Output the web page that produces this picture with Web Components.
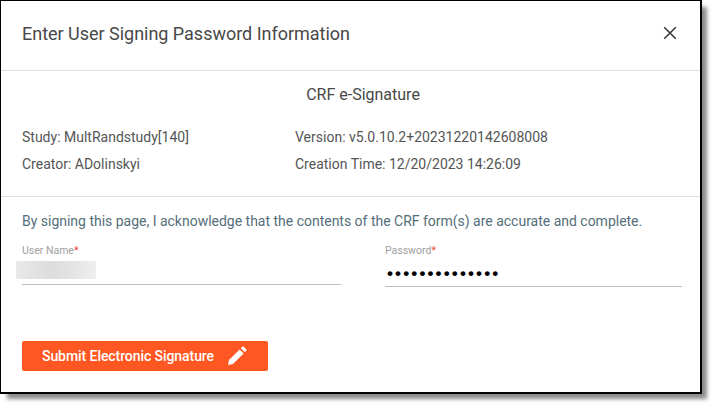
<!DOCTYPE html>
<html>
<head>
<meta charset="utf-8">
<title>Enter User Signing Password Information</title>
<style>
    html, body { margin: 0; padding: 0; background: #fff; }
    body { min-height: 406px; font-family: Roboto, "Liberation Sans", sans-serif; }
</style>
</head>
<body>
<signing-dialog>
    <span slot="title">Enter User Signing Password Information</span>
    <sign-info>
        <span slot="heading">CRF e-Signature</span>
        <span slot="study">Study: MultRandstudy[140]</span>
        <span slot="version">Version: v5.0.10.2+20231220142608008</span>
        <span slot="creator">Creator: ADolinskyi</span>
        <span slot="time">Creation Time: 12/20/2023 14:26:09</span>
    </sign-info>
    <sign-form>
        <span slot="notice">By signing this page, I acknowledge that the contents of the CRF form(s) are accurate and complete.</span>
        <text-field slot="user" label="User Name" blurred></text-field>
        <text-field slot="password" label="Password" value="••••••••••••••"></text-field>
        <submit-button slot="submit">Submit Electronic Signature</submit-button>
    </sign-form>
</signing-dialog>

<script>
class signingDialog extends HTMLElement {
    constructor() {
        super();
        this.shadow = this.attachShadow({ mode: 'open' });
    }

    connectedCallback() {
        this.shadow.innerHTML = `
            <style>
                :host {
                    display: block;
                    box-sizing: border-box;
                    width: 702px;
                    height: 394px;
                    background: #fff;
                    border: 1px solid #000;
                    border-width: 1px 2px 2px 1px;
                    box-shadow: 6px 6px 4px -1px #8c8c8c;
                    color: #424242;
                }

                header {
                    display: flex;
                    align-items: center;
                    justify-content: space-between;
                    box-sizing: border-box;
                    height: 70px;
                    padding: 0 23px 5px 21px;
                    border-bottom: 1px solid #e0e0e0;
                    font-size: 18px;
                    letter-spacing: -0.02px;
                    color: #484848;
                }

                svg { display: block; }
            </style>
            <header>
                <slot name="title"></slot>
                <svg width="14" height="14" viewBox="0 0 14 14" fill="none" stroke="#333" stroke-width="1.5">
                    <path d="M1.2 1.2 12.8 12.8M12.8 1.2 1.2 12.8"/>
                </svg>
            </header>
            <slot></slot>
        `;
    }
}

class signInfo extends HTMLElement {
    constructor() {
        super();
        this.shadow = this.attachShadow({ mode: 'open' });
    }

    connectedCallback() {
        this.shadow.innerHTML = `
            <style>
                :host {
                    display: block;
                    height: 125px;
                    padding: 0 21px;
                    border-bottom: 1px solid #e0e0e0;
                    font-size: 14px;
                    color: #555;
                }

                .heading {
                    box-sizing: border-box;
                    height: 52px;
                    padding: 15px 0 0 25px;
                    line-height: 18px;
                    text-align: center;
                    font-size: 16px;
                    color: #484848;
                }

                .rows {
                    display: grid;
                    grid-template-columns: 273px 1fr;
                    grid-auto-rows: 27px;
                    align-items: center;
                }
            </style>
            <div class="heading"><slot name="heading"></slot></div>
            <div class="rows">
                <slot name="study"></slot>
                <slot name="version"></slot>
                <slot name="creator"></slot>
                <slot name="time"></slot>
            </div>
        `;
    }
}

class signForm extends HTMLElement {
    constructor() {
        super();
        this.shadow = this.attachShadow({ mode: 'open' });
    }

    connectedCallback() {
        this.shadow.innerHTML = `
            <style>
                :host {
                    display: block;
                    padding: 0 21px;
                }

                .notice {
                    height: 46px;
                    padding-top: 16px;
                    box-sizing: border-box;
                    line-height: 17px;
                    font-size: 14px;
                    letter-spacing: -0.01px;
                    color: #546e7a;
                }

                .fields {
                    display: grid;
                    grid-template-columns: 319px 297px;
                    column-gap: 44px;
                    height: 98px;
                }
            </style>
            <div class="notice"><slot name="notice"></slot></div>
            <div class="fields">
                <slot name="user"></slot>
                <slot name="password"></slot>
            </div>
            <slot name="submit"></slot>
        `;
    }
}

class textField extends HTMLElement {
    constructor() {
        super();
        this.shadow = this.attachShadow({ mode: 'open' });
    }

    connectedCallback() {
        const isBlurred = this.hasAttribute('blurred');
        const value = this.getAttribute('value') || '';
        this.shadow.innerHTML = `
            <style>
                :host {
                    display: block;
                    position: relative;
                }

                label {
                    display: block;
                    height: 15px;
                    line-height: 15px;
                    font-size: 10.5px;
                    color: #9e9e9e;
                }

                label b {
                    font-weight: 400;
                    color: #f44336;
                }

                .value {
                    box-sizing: border-box;
                    height: ${isBlurred ? 27 : 29}px;
                    padding-left: 2px;
                    border-bottom: 1px solid #bdbdbd;
                    line-height: 31px;
                    font-family: "Liberation Sans", sans-serif;
                    font-size: 17px;
                    font-weight: 700;
                    letter-spacing: 2.15px;
                    color: #000;
                }

                /* the name is smudged out in the screenshot */
                .smudge {
                    position: absolute;
                    left: -6px;
                    top: 18px;
                    width: 80px;
                    height: 18px;
                    background: linear-gradient(90deg, #e9e9e9, #dcdcdc 45%, #e6e6e6 75%, #efefef);
                }
            </style>
            <label>${this.getAttribute('label')}<b>*</b></label>
            <div class="value">${value}</div>
            ${isBlurred ? '<div class="smudge"></div>' : ''}
        `;
    }
}

class submitButton extends HTMLElement {
    constructor() {
        super();
        this.shadow = this.attachShadow({ mode: 'open' });
    }

    connectedCallback() {
        this.shadow.innerHTML = `
            <style>
                :host {
                    display: flex;
                    align-items: center;
                    box-sizing: border-box;
                    width: 246px;
                    height: 30px;
                    padding-left: 20px;
                    gap: 13px;
                    border-radius: 2px;
                    background: #ff5722;
                    font-size: 14px;
                    font-weight: 500;
                    letter-spacing: -0.07px;
                    color: #fff;
                }

                svg { display: block; margin-top: -1px; }
            </style>
            <slot></slot>
            <svg width="20" height="20" viewBox="0 0 20 20" fill="#fff">
                <path d="M1 19 2 14 12.6 3.4 16.6 7.4 6 18ZM13.8 2.2 15.2.8Q16 0 16.8.8L19.2 3.2Q20 4 19.2 4.8L17.8 6.2Z"/>
            </svg>
        `;
    }
}

customElements.define('signing-dialog', signingDialog);
customElements.define('sign-info', signInfo);
customElements.define('sign-form', signForm);
customElements.define('text-field', textField);
customElements.define('submit-button', submitButton);
</script>
</body>
</html>
